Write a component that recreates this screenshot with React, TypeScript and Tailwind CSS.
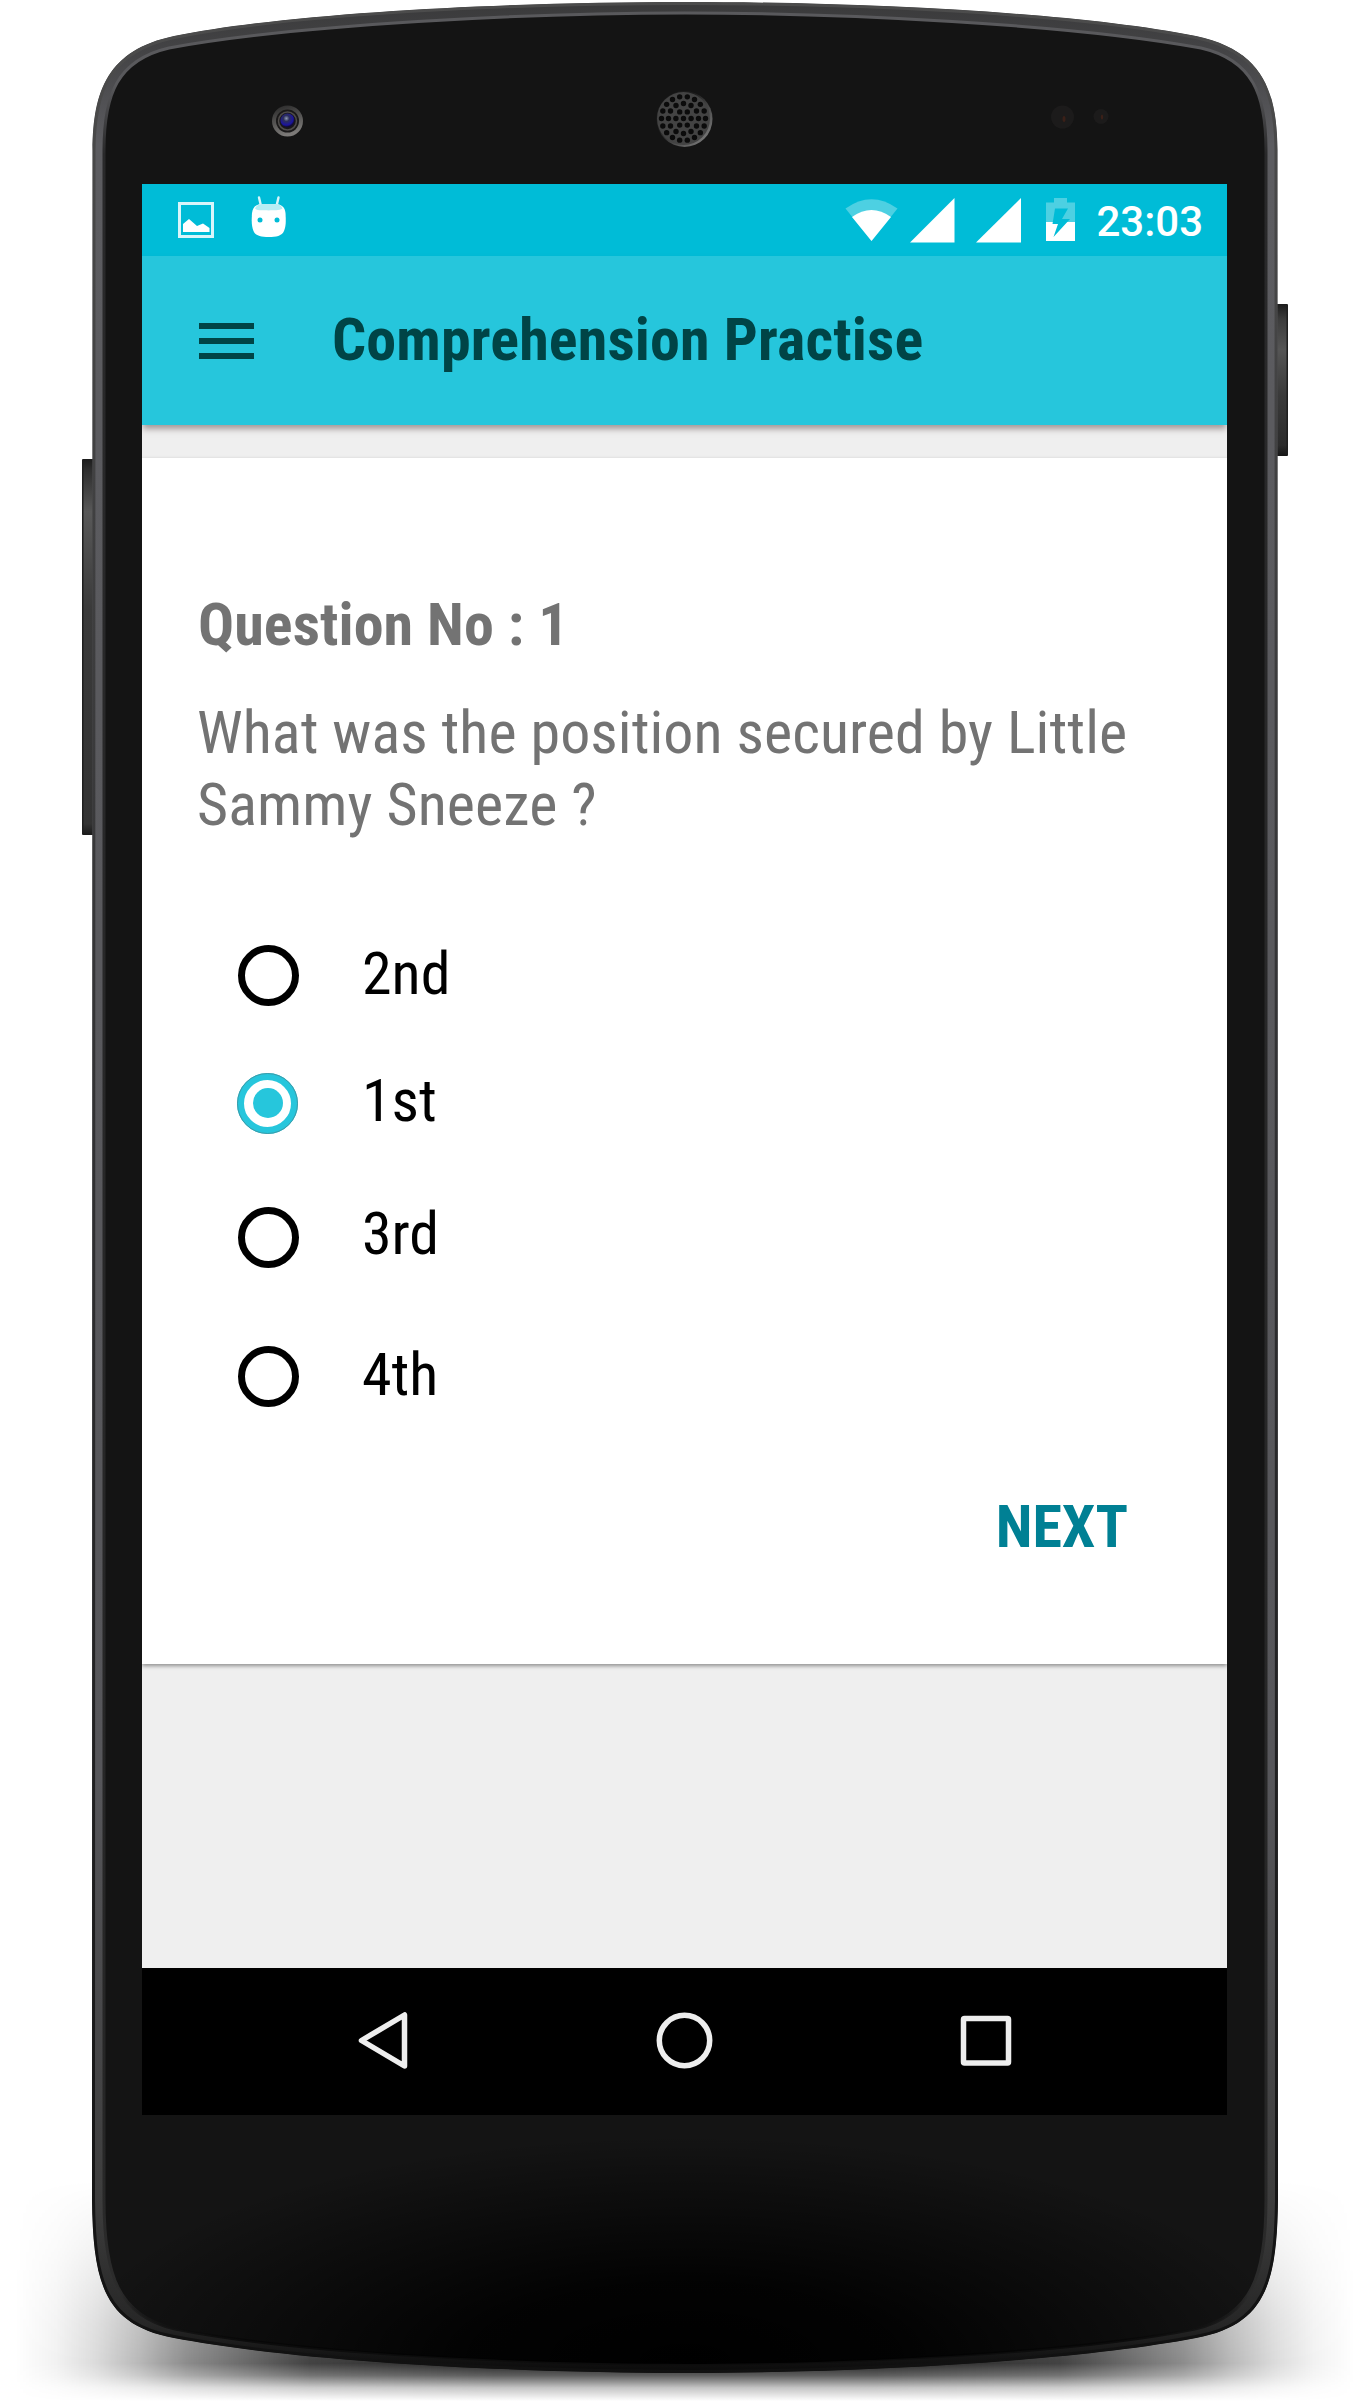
const OUTER =
  'M92.500 150 C93 90 108 50 174 36 C300 11 520 2 685 2 C850 2 1070 11 1196 36 C1262 50 1277 90 1277.500 150 L1278 2200 C1277 2285 1265 2325 1196 2338 C1070 2362 850 2373 685 2373 C520 2373 300 2362 174 2338 C105 2325 93 2285 92 2200 Z';
const INNER =
  'M104 150 C104 95 117 60 169 48 C300 24 530 13 685 13 C840 13 1070 24 1201 48 C1253 60 1266 95 1266 150 L1266 2200 C1266 2275 1252 2316 1195 2329 C1070 2354 840 2364 685 2364 C530 2364 300 2354 175 2329 C118 2316 104 2275 104 2200 Z';

const HOLE_RINGS = [
  { r: 0, n: 1 },
  { r: 7.6, n: 6 },
  { r: 15, n: 12 },
  { r: 22, n: 18 },
];

function PhoneFrame() {
  return (
    <svg className="absolute inset-0" width="1370" height="2405" viewBox="0 0 1370 2405">
      <defs>
        <linearGradient id="rim" x1="0" y1="0" x2="0" y2="1">
          <stop offset="0" stopColor="#3a3a3b" />
          <stop offset="0.02" stopColor="#434345" />
          <stop offset="0.06" stopColor="#5c5c60" />
          <stop offset="0.75" stopColor="#56565a" />
          <stop offset="0.93" stopColor="#3c3c3c" />
          <stop offset="0.98" stopColor="#262626" />
          <stop offset="1" stopColor="#0a0a0a" />
        </linearGradient>
        <linearGradient id="edge" x1="0" y1="0" x2="0" y2="1">
          <stop offset="0" stopColor="#59595c" />
          <stop offset="0.03" stopColor="#59595c" />
          <stop offset="0.06" stopColor="#29292a" />
          <stop offset="0.9" stopColor="#262626" />
          <stop offset="0.97" stopColor="#2c2c2c" />
          <stop offset="0.99" stopColor="#0c0c0c" />
        </linearGradient>
        <linearGradient id="outline" x1="0" y1="0" x2="0" y2="1">
          <stop offset="0" stopColor="#4c4c4c" />
          <stop offset="0.5" stopColor="#303032" />
          <stop offset="1" stopColor="#111" />
        </linearGradient>
        <clipPath id="body">
          <path d={OUTER} />
        </clipPath>
        <radialGradient id="chin" gradientUnits="userSpaceOnUse" cx="0" cy="0" r="1" gradientTransform="translate(685 2360) scale(620 225)">
          <stop offset="0" stopColor="#000" />
          <stop offset="0.35" stopColor="#000" stopOpacity="0.88" />
          <stop offset="0.7" stopColor="#000" stopOpacity="0.4" />
          <stop offset="1" stopColor="#000" stopOpacity="0" />
        </radialGradient>
        <linearGradient id="leftKey" x1="0" y1="0" x2="0" y2="1">
          <stop offset="0" stopColor="#1c1c1c" />
          <stop offset="0.03" stopColor="#2e2e2e" />
          <stop offset="0.14" stopColor="#585858" />
          <stop offset="0.4" stopColor="#3a3a3a" />
          <stop offset="0.97" stopColor="#333" />
          <stop offset="1" stopColor="#1a1a1a" />
        </linearGradient>
        <linearGradient id="rightKey" x1="0" y1="0" x2="0" y2="1">
          <stop offset="0" stopColor="#1c1c1c" />
          <stop offset="0.1" stopColor="#3c3c3c" />
          <stop offset="0.3" stopColor="#555" />
          <stop offset="0.6" stopColor="#3a3a3a" />
          <stop offset="0.93" stopColor="#2c2c2c" />
          <stop offset="1" stopColor="#161616" />
        </linearGradient>
        <linearGradient id="lensRing" x1="0" y1="0" x2="0.3" y2="1">
          <stop offset="0" stopColor="#262626" />
          <stop offset="1" stopColor="#7c7a78" />
        </linearGradient>
        <linearGradient id="grille" x1="0" y1="0" x2="1" y2="1">
          <stop offset="0.35" stopColor="#1c1c1c" />
          <stop offset="1" stopColor="#8c8c8c" />
        </linearGradient>
        <radialGradient id="lens" cx="0.42" cy="0.35" r="0.6">
          <stop offset="0" stopColor="#8f9ab5" />
          <stop offset="0.35" stopColor="#2c2f5a" />
          <stop offset="0.8" stopColor="#1b14a0" />
          <stop offset="1" stopColor="#110c33" />
        </radialGradient>
        <linearGradient id="ground" gradientUnits="userSpaceOnUse" x1="15" y1="0" x2="1355" y2="0">
          <stop offset="0" stopColor="#000" stopOpacity="0" />
          <stop offset="0.03" stopColor="#000" stopOpacity="0.05" />
          <stop offset="0.06" stopColor="#000" stopOpacity="0.14" />
          <stop offset="0.093" stopColor="#000" stopOpacity="0.28" />
          <stop offset="0.128" stopColor="#000" stopOpacity="0.45" />
          <stop offset="0.22" stopColor="#000" stopOpacity="0.74" />
          <stop offset="0.36" stopColor="#000" stopOpacity="0.86" />
          <stop offset="0.64" stopColor="#000" stopOpacity="0.86" />
          <stop offset="0.78" stopColor="#000" stopOpacity="0.74" />
          <stop offset="0.872" stopColor="#000" stopOpacity="0.45" />
          <stop offset="0.907" stopColor="#000" stopOpacity="0.28" />
          <stop offset="0.94" stopColor="#000" stopOpacity="0.14" />
          <stop offset="0.97" stopColor="#000" stopOpacity="0.05" />
          <stop offset="1" stopColor="#000" stopOpacity="0" />
        </linearGradient>
        <linearGradient id="fade" x1="0" y1="0" x2="0" y2="1">
          <stop offset="0" stopColor="#000" />
          <stop offset="0.3" stopColor="#555" />
          <stop offset="0.65" stopColor="#ddd" />
          <stop offset="0.83" stopColor="#fff" />
          <stop offset="0.885" stopColor="#bbb" />
          <stop offset="0.94" stopColor="#444" />
          <stop offset="1" stopColor="#000" />
        </linearGradient>
        <mask id="floor">
          <rect x="0" y="2180" width="1370" height="221" fill="url(#fade)" />
        </mask>
      </defs>

      <rect x="0" y="2180" width="1370" height="221" fill="url(#ground)" mask="url(#floor)" />

      <rect x="82" y="459" width="12" height="376" rx="1" fill="url(#leftKey)" />
      <rect x="82" y="461" width="1.500" height="372" fill="#1f1f1f" />
      <rect x="1276" y="304" width="12" height="152" rx="1" fill="url(#rightKey)" />
      <rect x="1286.500" y="306" width="1.500" height="149" fill="#1f1f1f" />

      <g clipPath="url(#body)">
        <path d={OUTER} fill="url(#rim)" stroke="url(#outline)" strokeWidth="6" />
      </g>
      <path d={INNER} fill="#141414" stroke="url(#edge)" strokeWidth="3" />
      <path d={INNER} fill="url(#chin)" />

      <ellipse cx="287.500" cy="121" rx="15.500" ry="15.500" fill="url(#lensRing)" />
      <circle cx="287.500" cy="121" r="11.500" fill="#1a1919" />
      <circle cx="287.500" cy="121" r="9" fill="none" stroke="#5c5957" strokeWidth="1.500" opacity="0.8" />
      <circle cx="287.500" cy="120.500" r="7" fill="url(#lens)" />

      <circle cx="684.500" cy="119" r="28" fill="url(#grille)" />
      <circle cx="683.500" cy="118.500" r="26.500" fill="#434343" />
      {HOLE_RINGS.map(({ r, n }) =>
        Array.from({ length: n }, (_, i) => {
          const a = (i / n) * Math.PI * 2;
          return <circle key={`${r}-${i}`} cx={683.5 + r * Math.cos(a)} cy={118.5 + r * Math.sin(a)} r="2.700" fill="#0b0b0b" />;
        }),
      )}

      <circle cx="1062.500" cy="117" r="11.500" fill="#1c1b1b" />
      <ellipse cx="1064" cy="119" rx="1.500" ry="3" fill="#3b2018" />
      <circle cx="1101" cy="116.500" r="7.500" fill="#1c1b1b" />
      <ellipse cx="1102" cy="117" rx="1.200" ry="2.500" fill="#3b2018" />
    </svg>
  );
}

function StatusBar() {
  return (
    <div className="flex h-[72px] shrink-0 bg-[#00bcd7]">
      <svg width="400" height="72" viewBox="142 184 400 72">
        <rect x="179.500" y="203.500" width="33" height="33" fill="none" stroke="#d9f5fa" strokeWidth="3" />
        <path d="M183 232 V224 L189 219 L197 226 L203 223.500 L209.500 228 V232 Z" fill="#fff" />
        <path d="M259 197.500 L261 206 M278.500 197.500 L276.500 206" stroke="#d9f5fa" strokeWidth="2.400" strokeLinecap="round" />
        <path d="M252 213 C253 207 256 204 262 204 H275 C281 204 285 207 285.500 213 C286 222 286 226 284 231 C282 236 276 237 268.700 237 C261 237 255.500 236 253.500 231 C251.500 226 251.500 222 252 213 Z" fill="#fff" />
        <path d="M255 208.500 C257 204.800 259 204 263 204 H275 C279 204 281 205 282.500 208.500 C279 211 274 209.800 268.700 210.500 C263 209.800 258 211.500 255 208.500 Z" fill="#b6edf4" />
        <circle cx="260" cy="220" r="2.500" fill="#00bcd7" />
        <circle cx="277" cy="220" r="2.500" fill="#00bcd7" />
      </svg>
      <svg className="ml-auto" width="240" height="72" viewBox="840 184 240 72">
        <path d="M845.500 208.500 Q871.500 190 897.500 208.500 L871.500 241 Z" fill="#4dd0e2" />
        <path d="M852 217 Q871.500 203 891 217 L871.500 241 Z" fill="#fff" />
        <path d="M954.500 198 V242.500 H910 Z" fill="#fff" />
        <path d="M1021 198 V242.500 H976 Z" fill="#fff" />
        <path d="M1046 241 V202.500 H1054 V198 H1067 V202.500 H1075 V241 Z" fill="#4dd0e2" />
        <path d="M1046 222 H1075 V241 H1046 Z" fill="#fff" />
        <path d="M1055 208.500 H1068 L1062 219 H1070 L1053.500 237 L1058 224 H1052.500 Z" fill="#00bcd7" />
      </svg>
      <span className="mt-[13px] mr-[24px] ml-[16px] font-[Roboto] text-[42px] leading-[50px] font-medium text-white [font-stretch:100%]">
        23:03
      </span>
    </div>
  );
}

function AppBar() {
  return (
    <header className="relative z-10 flex h-[169px] shrink-0 items-center bg-[#26c6dc] pl-[57px] shadow-[0_5px_6px_-1px_rgba(90,70,70,0.5)]">
      <button className="flex w-[55px] flex-col gap-[9px]" aria-label="Menu">
        <span className="h-[6px] bg-[#004446]" />
        <span className="h-[6px] bg-[#004446]" />
        <span className="h-[6px] bg-[#004446]" />
      </button>
      <h1 className="mb-[2px] ml-[78px] text-[60px] leading-[72px] font-bold tracking-[0.15px] whitespace-nowrap text-[#004446]">
        Comprehension Practise
      </h1>
    </header>
  );
}

function Radio({ checked }: { checked: boolean }) {
  return checked ? (
    <span className="mr-px -ml-px flex size-[61px] shrink-0 items-center justify-center rounded-full border-[7px] border-[#26c6dc] outline-1 -outline-offset-1 outline-[#3d9ba8]">
      <span className="size-[30px] rounded-full bg-[#26c6dc]" />
    </span>
  ) : (
    <span className="size-[61px] shrink-0 rounded-full border-[7px] border-black" />
  );
}

const OPTIONS = [
  { label: '2nd', row: 'h-[126px]', text: 'pb-[2px]' },
  { label: '1st', row: 'h-[130px]', text: 'pb-[5px]' },
  { label: '3rd', row: 'h-[138px]', text: 'pb-[7px]' },
  { label: '4th', row: 'h-[140px]', text: 'pb-[2px]' },
];

function QuestionCard() {
  return (
    <main className="mt-[33px] flex h-[1206px] shrink-0 flex-col bg-white shadow-[0_2px_4px_rgba(0,0,0,0.4)]">
      <h2 className="mt-[131px] ml-[56px] text-[60px] leading-[72px] font-bold tracking-[0.08px] whitespace-nowrap text-[#737373]">
        Question No : 1
      </h2>
      <p className="mt-[36px] ml-[55px] text-[60px] leading-[72px] tracking-[0.08px] whitespace-nowrap text-[#737373]">
        What was the position secured by Little
        <br />
        Sammy Sneeze ?
      </p>
      <div className="mt-[71px] ml-[96px]">
        {OPTIONS.map((o) => (
          <label key={o.label} className={`flex items-center text-black ${o.row}`}>
            <Radio checked={o.label === '1st'} />
            <span className={`ml-[63px] text-[60px] leading-[72px] ${o.text}`}>{o.label}</span>
          </label>
        ))}
      </div>
      <button className="mt-[45px] mr-[99px] ml-auto text-[60px] leading-[72px] font-bold text-[#008094]">NEXT</button>
    </main>
  );
}

function NavBar() {
  return (
    <nav className="mt-auto h-[147px] shrink-0 bg-black">
      <svg width="1085" height="147" viewBox="142 1968 1085 147" fill="none" stroke="#eeeeee" strokeWidth="5.500" strokeLinejoin="round">
        <path d="M404.500 2015 V2066 L361.500 2040.500 Z" />
        <circle cx="684.500" cy="2040.500" r="25.200" />
        <rect x="963.500" y="2018.500" width="45" height="44.500" rx="1" />
      </svg>
    </nav>
  );
}

export default function App() {
  return (
    <div className="relative h-[2405px] w-[1370px] overflow-hidden bg-white font-['Roboto_Condensed','Roboto',sans-serif] [font-stretch:75%]">
      <PhoneFrame />
      <div className="relative mt-[184px] ml-[142px] flex h-[1931px] w-[1085px] flex-col overflow-hidden bg-[#efefef]">
        <StatusBar />
        <AppBar />
        <QuestionCard />
        <NavBar />
      </div>
    </div>
  );
}
